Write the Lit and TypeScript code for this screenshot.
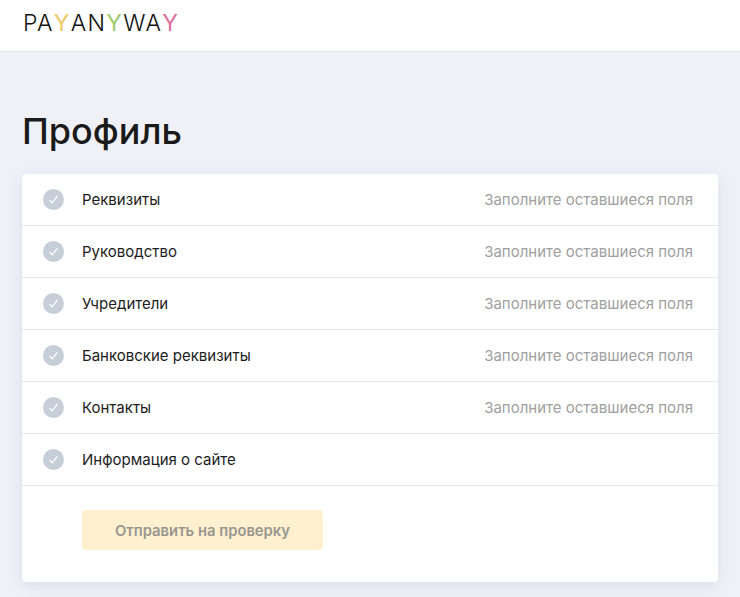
import { LitElement, html, css } from "lit";
import { customElement } from "lit/decorators.js";

const rows = [
  ["Реквизиты", "Заполните оставшиеся поля"],
  ["Руководство", "Заполните оставшиеся поля"],
  ["Учредители", "Заполните оставшиеся поля"],
  ["Банковские реквизиты", "Заполните оставшиеся поля"],
  ["Контакты", "Заполните оставшиеся поля"],
  ["Информация о сайте", ""],
];

@customElement("app-root")
export class AppRoot extends LitElement {
  static styles = css`
    :host {
      display: block;
      height: 597px;
      overflow: hidden;
      background: #f0f1f7;
      font-family: "Inter", "Open Sans", sans-serif;
      color: #1c1c1c;
    }
    .top {
      height: 52px;
      box-sizing: border-box;
      background: #fff;
      border-bottom: 1px solid #e3e4ea;
      padding: 8px 0 0 23px;
    }
    .logo {
      font-family: "Inter", sans-serif;
      font-size: 23px;
      font-weight: 300;
      line-height: 30px;
      letter-spacing: 1.3px;
      color: #111;
      white-space: nowrap;
    }
    .y1 { color: #f2c766; font-weight: 400; }
    .y2 { color: #9ccb6c; font-weight: 400; }
    .y3 { color: #dc6f9c; font-weight: 400; }
    main {
      padding: 0 22px;
    }
    h1 {
      margin: 0;
      padding-top: 56px;
      height: 66px;
      font-size: 36px;
      line-height: 46px;
      font-weight: 500;
      color: #1a1a1a;
    }
    .card {
      background: #fff;
      border-radius: 4px;
      box-shadow: 0 4px 14px rgba(130, 140, 175, 0.18);
      height: 408px;
      box-sizing: border-box;
    }
    .row {
      height: 52px;
      box-sizing: border-box;
      border-bottom: 1px solid #e8e9ee;
      display: flex;
      align-items: center;
      padding: 0 25px 0 21px;
      font-size: 15px;
      font-weight: 400;
    }
    .check {
      width: 21px;
      height: 21px;
      margin-right: 18px;
      flex: none;
      display: block;
    }
    .name { flex: 1; color: #1c1c1c; }
    .hint { color: #a0a0a0; }
    .foot {
      padding: 24px 0 0 60px;
    }
    button {
      width: 241px;
      height: 40px;
      border: 0;
      border-radius: 4px;
      background: #fff1cf;
      color: #999690;
      font: 600 14.8px "Inter", sans-serif;
      padding: 1px 0 0;
    }
  `;

  render() {
    return html`
      <div class="top">
        <div class="logo">PA<span class="y1">Y</span>AN<span class="y2">Y</span>WA<span class="y3">Y</span></div>
      </div>
      <main>
        <h1>Профиль</h1>
        <div class="card">
          ${rows.map(
            ([name, hint]) => html`
              <div class="row">
                <svg class="check" viewBox="0 0 21 21">
                  <circle cx="10.5" cy="10.5" r="10.5" fill="#c6ced9" />
                  <path d="M6.6 10.9l2.7 2.9 5-6.6" fill="none" stroke="#fff" stroke-width="1.3" />
                </svg>
                <span class="name">${name}</span>
                <span class="hint">${hint}</span>
              </div>
            `
          )}
          <div class="foot"><button>Отправить на проверку</button></div>
        </div>
      </main>
    `;
  }
}
